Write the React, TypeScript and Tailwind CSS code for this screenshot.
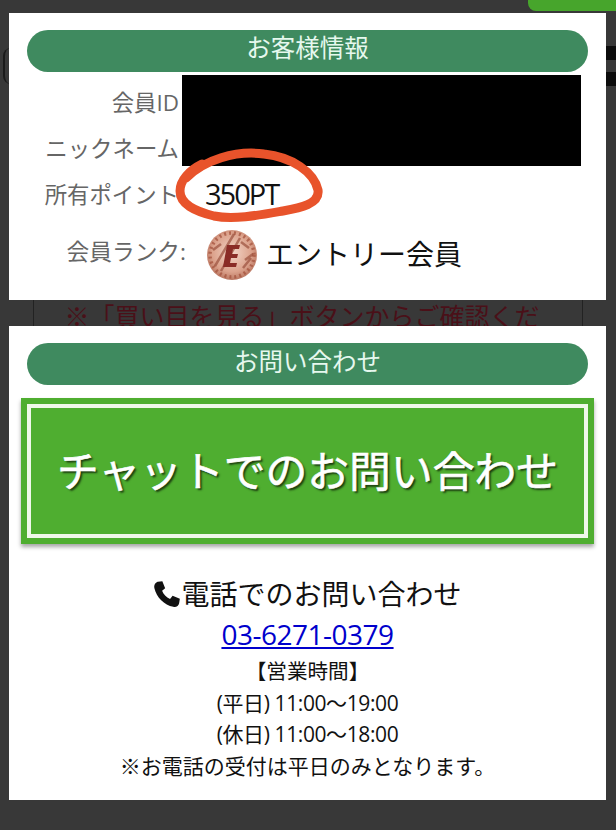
import React from "react";

const jp = "font-['Open_Sans','Noto_Sans_CJK_JP',sans-serif]";

function Pill({ children, shift }: { children: React.ReactNode; shift: string }) {
  return (
    <div className={`h-[42px] mx-[18px] rounded-[21px] bg-[#3f8a5f] flex items-center justify-center text-[24.5px] leading-none text-[#e6f8ee] ${shift}`}>
      {children}
    </div>
  );
}

function Coin() {
  return (
    <svg width="50" height="50" viewBox="0 0 50 50" className="shrink-0">
      <defs>
        <radialGradient id="c" cx="50%" cy="45%" r="60%">
          <stop offset="0%" stopColor="#f3d6c8" />
          <stop offset="65%" stopColor="#dca28c" />
          <stop offset="100%" stopColor="#b06a55" />
        </radialGradient>
      </defs>
      <circle cx="25" cy="25" r="25" fill="url(#c)" />
      <circle cx="25" cy="25" r="22" fill="none" stroke="#a4533d" strokeWidth="3.5" strokeDasharray="2 3" opacity="0.75" />
      <path d="M8 36 L27 4 M14 41 L33 8 M36 38 L44 28 M6 20 L14 14 M34 12 L42 18 M38 30 L46 24" stroke="#964a37" strokeWidth="2.5" opacity="0.65" />
      <path d="M20 15 H33 L32 19 H26 L25 24 H31 L30 28 H24 L23 33 H30 L29 37 H16 Z" fill="#8a2c26" />
    </svg>
  );
}

export default function App() {
  return (
    <div className={`relative w-[616px] h-[830px] overflow-hidden bg-[#383838] ${jp}`}>
      {/* dimmed page behind the panels */}
      <div className="h-[13px] flex justify-end">
        <div className="w-[88px] h-[11px] bg-[#47a52c] rounded-bl-[8px]" />
      </div>
      <div className="absolute left-[606px] top-[46px] w-[10px] h-[14px] bg-[#0c0c0c]" />
      <div className="absolute left-[606px] top-[72px] w-[10px] h-[14px] bg-[#0c0c0c]" />
      <div className="absolute left-[3px] top-[48px] w-[8px] h-[36px] rounded-l-full border-l-2 border-[#1a1a1a]" />

      {/* customer panel */}
      <section className="relative ml-[9px] w-[597px] h-[287px] bg-white pt-[17px]">
        <Pill shift="pb-[5px]">お客様情報</Pill>
        <div className="mt-[3px] flex flex-col">
          <div className="h-[46px] mt-[7px] pb-[5px] w-[170px] flex items-center justify-end text-[22.4px] text-[#666]">会員ID</div>
          <div className="h-[46px] pb-[5px] w-[170px] flex items-center justify-end text-[22.4px] text-[#666]">ニックネーム</div>
          <div className="h-[46px] pb-[5px] flex items-center text-[22.4px] text-[#666]">
            <span className="w-[170px] text-right">所有ポイント</span>
            <span className="ml-[26px] pb-[2px] text-[#111] text-[29px] tracking-[-2px]">350PT</span>
          </div>
          <div className="mt-[10px] h-[50px] flex items-center text-[22.7px] text-[#666]">
            <span className="w-[177px] text-right pb-[5px]">会員ランク:</span>
            <span className="ml-[21px]"><Coin /></span>
            <span className="ml-[9px] text-[28px] text-[#111] pb-[3px]">エントリー会員</span>
          </div>
        </div>
        <div className="absolute left-[173px] top-[62px] w-[399px] h-[91px] bg-black" />
      </section>

      {/* strip of page seen between panels */}
      <div className="h-[26px] mx-[33px] w-[550px] overflow-hidden border-x border-[#222] flex justify-center pr-[12px]">
        <span className="text-[25px] leading-[33px] text-[#4a1018] whitespace-nowrap">※「買い目を見る」ボタンからご確認くだ</span>
      </div>

      {/* contact panel */}
      <section className="ml-[9px] w-[597px] h-[474px] bg-white pt-[17px]">
        <Pill shift="pb-[4px]">お問い合わせ</Pill>
        <div className="mt-[13px] ml-[12px] w-[573px] h-[146px] p-[6px] bg-[#4fae30] shadow-[0_3px_4px_rgba(0,0,0,0.35)]">
          <div className="h-full border-[4px] border-[#f0f8ea] flex items-center justify-center text-[41.8px] leading-none text-white whitespace-nowrap [text-shadow:2px_2px_2px_#1c3d10] [-webkit-text-stroke:0.6px_white]">
            チャットでのお問い合わせ
          </div>
        </div>
        <div className="mt-[28px] flex flex-col items-center text-[#111]">
          <div className="h-[44px] flex items-center text-[28px]">
            <svg width="28" height="28" viewBox="0 0 24 24" fill="#111">
              <path d="M4.2 1.6 L8 1 L10.4 7 L7.8 9.2 C8.8 12 11.4 14.8 14.6 16.2 L16.8 13.6 L23 16 L22.4 20 C22 22.4 19.6 23.6 17.4 23 C9.6 21.4 3 14.8 1.2 7 C0.6 4.6 2 2.2 4.2 1.6 Z" />
            </svg>
            <span>電話でのお問い合わせ</span>
          </div>
          <a href="#" className="h-[37px] leading-[37px] text-[28px] text-[#0000cc] underline tracking-[-0.5px]">03-6271-0379</a>
          <div className="mt-[3px] text-[21px] leading-[31.5px] text-center">
            <div className="text-[20.6px]">【営業時間】</div>
            <div className="tracking-[-0.4px]">(平日) 11:00〜19:00</div>
            <div className="tracking-[-0.4px]">(休日) 11:00〜18:00</div>
            <div className="text-[21px]">※お電話の受付は平日のみとなります。</div>
          </div>
        </div>
      </section>

      {/* hand-drawn marker circle */}
      <svg className="absolute left-0 top-0 pointer-events-none" width="616" height="830" fill="none">
        <path
          d="M186 178 C204 160 236 150 264 154 C292 157 314 172 318 190 C320 204 300 208 283 211 C260 215 234 220 214 216 C194 211 180 204 180 191 C180 180 190 170 202 164"
          stroke="#e8532b"
          strokeWidth="9"
          strokeLinecap="round"
        />
      </svg>
    </div>
  );
}
